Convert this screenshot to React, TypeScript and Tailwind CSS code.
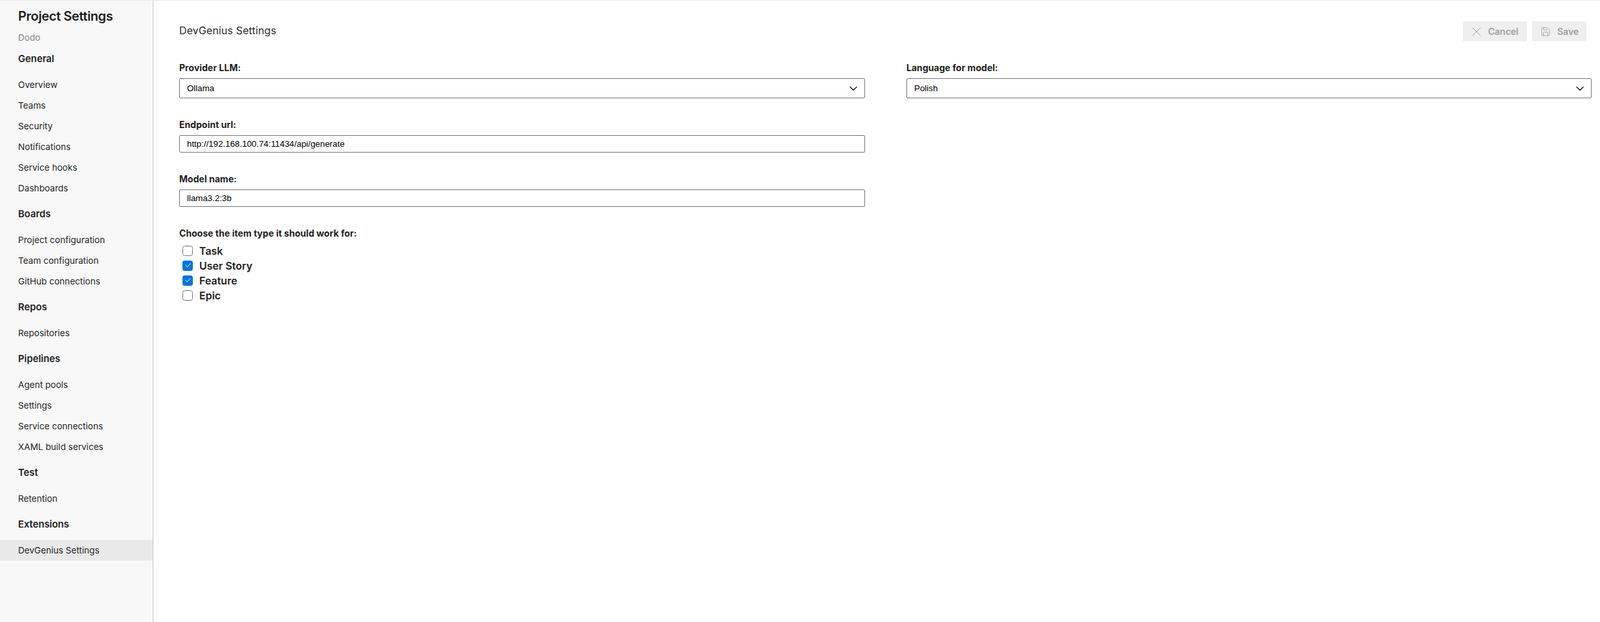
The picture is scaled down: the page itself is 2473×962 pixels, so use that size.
import { Check, ChevronDown, Save, X } from "lucide-react";

const sections = [
  { title: "General", items: ["Overview", "Teams", "Security", "Notifications", "Service hooks", "Dashboards"] },
  { title: "Boards", items: ["Project configuration", "Team configuration", "GitHub connections"] },
  { title: "Repos", items: ["Repositories"] },
  { title: "Pipelines", items: ["Agent pools", "Settings", "Service connections", "XAML build services"] },
  { title: "Test", items: ["Retention"] },
  { title: "Extensions", items: ["DevGenius Settings"] },
];

const itemTypes = [
  { name: "Task", checked: false },
  { name: "User Story", checked: true },
  { name: "Feature", checked: true },
  { name: "Epic", checked: false },
];

function Sidebar() {
  return (
    <aside className="w-[237px] shrink-0 bg-[#f8f8f8] border-r border-[#c8c8c8]">
      <h1 className="pl-7 pt-[10px] text-[20px] leading-[28px] font-semibold text-[#1e1e1e] tracking-[-0.4px]">Project Settings</h1>
      <div className="pl-7 mt-[8px] text-[13.6px] leading-[22px] text-[#858585]">Dodo</div>
      {sections.map((s, i) => (
        <div key={s.title} className={i === 0 ? "mt-[6px]" : "mt-[8px]"}>
          <div className="pl-7 pt-px h-[32px] flex items-center text-[14.8px] font-semibold text-[#1e1e1e]">{s.title}</div>
          <div className="mt-[8px]">
            {s.items.map((item) => (
              <div
                key={item}
                className={`pl-7 h-[32px] flex items-center text-[13.6px] text-[#262626] ${item === "DevGenius Settings" ? "bg-[#e9e9e9]" : ""}`}
              >
                {item}
              </div>
            ))}
          </div>
        </div>
      ))}
    </aside>
  );
}

function Field({ label, children, className }: { label: string; children: React.ReactNode; className?: string }) {
  return (
    <div className={className}>
      <label className="block text-[14px] leading-[20px] font-bold tracking-[0.04px] text-[#1e1e1e] mb-[6px]">{label}</label>
      {children}
    </div>
  );
}

function Dropdown({ value }: { value: string }) {
  return (
    <div className="relative">
      <select
        defaultValue={value}
        className="block w-full h-[31px] appearance-none bg-white border border-[#767676] rounded-[2px] pl-[11px] text-[13.33px] text-black font-['Liberation_Sans',sans-serif]"
      >
        <option>{value}</option>
      </select>
      <ChevronDown className="absolute right-[8px] top-[6px] w-5 h-5 text-[#1a1a1a] pointer-events-none" strokeWidth={1.75} />
    </div>
  );
}

function TextBox({ value }: { value: string }) {
  return (
    <input
      readOnly
      value={value}
      className="block w-full h-[27px] bg-white border border-[#767676] rounded-[2px] pl-[11px] text-[13.33px] text-black font-['Liberation_Sans',sans-serif]"
    />
  );
}

function CheckRow({ name, checked }: { name: string; checked: boolean }) {
  return (
    <div className="flex items-center h-[23px] pl-[5px]">
      <span
        className={`w-4 h-4 rounded-[3.5px] flex items-center justify-center ${checked ? "bg-[#0075db]" : "bg-white border border-[#767676]"}`}
      >
        {checked && <Check className="w-[11px] h-[11px] text-white" strokeWidth={2} />}
      </span>
      <span className="ml-[10px] text-[16px] font-semibold text-[#1e1e1e]">{name}</span>
    </div>
  );
}

export default function App() {
  return (
    <div className="h-[962px] w-full flex flex-col overflow-hidden bg-white font-['Inter',sans-serif]">
      <div className="h-px bg-[#e8e8e8] shrink-0" />
      <div className="flex flex-1 min-h-0">
        <Sidebar />
        <main className="flex-1 pl-[40px] pr-[13px]">
          <div className="flex items-start justify-between pt-[32px]">
            <h2 className="mt-[2px] text-[16px] leading-[24px] tracking-[0.12px] text-[#2b2b2b]">DevGenius Settings</h2>
            <div className="flex gap-2 mr-[8px]">
              <button className="h-[31px] w-[99px] flex items-center gap-[6px] pl-[9px] rounded-[2px] bg-[#efefef] text-[14px] font-semibold text-[#a0a0a0]">
                <X className="w-6 h-6 text-[#a6a6a6]" strokeWidth={1} />
                Cancel
              </button>
              <button className="h-[31px] w-[84px] flex items-center gap-[10px] pl-[13px] rounded-[2px] bg-[#efefef] text-[14px] font-semibold text-[#a0a0a0]">
                <Save className="w-4 h-4 text-[#a6a6a6]" strokeWidth={1.5} />
                Save
              </button>
            </div>
          </div>

          <div className="grid grid-cols-[1060px_1059px] gap-x-[64px] pt-[31px]">
            <div>
              <Field label="Provider LLM:">
                <Dropdown value="Ollama" />
              </Field>
              <Field label="Endpoint url:" className="mt-[31px]">
                <TextBox value="http://192.168.100.74:11434/api/generate" />
              </Field>
              <Field label="Model name:" className="mt-[31px]">
                <TextBox value="llama3.2:3b" />
              </Field>
              <div className="mt-[31px]">
                <div className="text-[14px] leading-[20px] font-bold tracking-[0.04px] text-[#1e1e1e] mb-[5px]">Choose the item type it should work for:</div>
                <div>
                  {itemTypes.map((t) => (
                    <CheckRow key={t.name} name={t.name} checked={t.checked} />
                  ))}
                </div>
              </div>
            </div>
            <div>
              <Field label="Language for model:">
                <Dropdown value="Polish" />
              </Field>
            </div>
          </div>
        </main>
      </div>
    </div>
  );
}
